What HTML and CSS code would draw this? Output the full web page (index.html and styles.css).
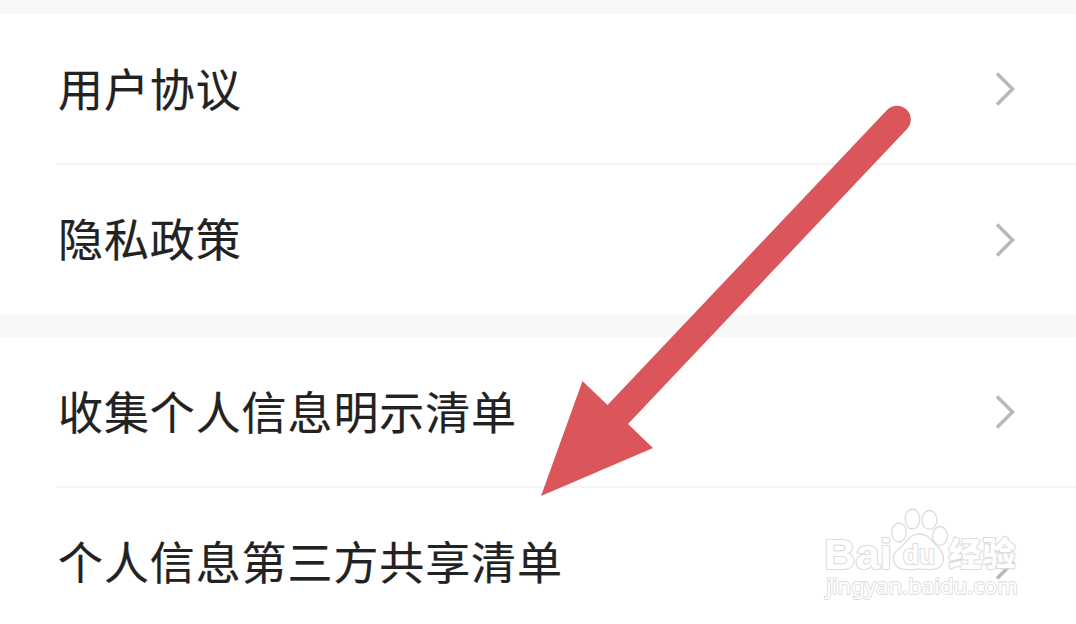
FILE: index.html
```
<!DOCTYPE html>
<html lang="zh-CN">
<head>
    <meta charset="UTF-8">
    <title>隐私</title>
    <link rel="stylesheet" href="styles.css">
</head>
<body>
<div class="page">
    <div class="group">
        <div class="row">
            <span class="label">用户协议</span>
            <svg class="chevron" width="20" height="36" viewBox="0 0 20 36"><path d="M2 2.500L17.500 18L2 33.500"/></svg>
        </div>
        <div class="row">
            <span class="label">隐私政策</span>
            <svg class="chevron" width="20" height="36" viewBox="0 0 20 36"><path d="M2 2.500L17.500 18L2 33.500"/></svg>
        </div>
    </div>
    <div class="group">
        <div class="row">
            <span class="label">收集个人信息明示清单</span>
            <svg class="chevron" width="20" height="36" viewBox="0 0 20 36"><path d="M2 2.500L17.500 18L2 33.500"/></svg>
        </div>
        <div class="row">
            <span class="label">个人信息第三方共享清单</span>
            <svg class="chevron" width="20" height="36" viewBox="0 0 20 36"><path d="M2 2.500L17.500 18L2 33.500"/></svg>
        </div>
    </div>
    <svg class="arrow" width="376" height="396" viewBox="0 0 376 396">
        <path d="M1 396L42.500 281L67.500 305L347 10A13.700 13.700 0 0 1 367 29L88 324L113 348Z"/>
    </svg>
    <svg class="watermark" width="230" height="110" viewBox="0 0 230 110">
        <text class="wm-brand" x="14" y="68.500" textLength="68" lengthAdjust="spacingAndGlyphs">Bai</text>
        <g class="wm-paw">
            <ellipse cx="102.500" cy="19" rx="7.300" ry="10"/>
            <ellipse cx="119.500" cy="20" rx="7.500" ry="9.500"/>
            <ellipse cx="89" cy="32.500" rx="7.300" ry="9.500"/>
            <ellipse cx="130" cy="36" rx="7.500" ry="9.500"/>
            <path d="M109 34C99 34 97 42 91 47C85 51 82 56 84 62C87 71 97 70 109 69C121 70 130 71 133 62C135 55 131 50 127 46C121 41 119 34 109 34Z"/>
        </g>
        <text class="wm-du" x="93" y="64" textLength="32" lengthAdjust="spacingAndGlyphs">du</text>
        <text class="wm-cn" x="138.500" y="66" textLength="67">经验</text>
        <text class="wm-url" x="16" y="94" textLength="192" lengthAdjust="spacingAndGlyphs">jingyan.baidu.com</text>
    </svg>
</div>
</body>
</html>
```
FILE: styles.css
```
body {
    margin: 0;
    background-color: #fff;
    font-family: "Noto Sans CJK SC", sans-serif;
}

.page {
    position: relative;
    height: 624px;
    overflow: hidden;
}

.group {
    border-top: 22px solid #f7f7f7;
}

.group:first-child {
    border-top-width: 14px;
}

.row {
    display: flex;
    align-items: center;
    justify-content: space-between;
    box-sizing: border-box;
    height: 150px;
    margin-left: 57px;
    padding-right: 61px;
}

.row:first-child {
    height: 151px;
    padding-top: 1px;
    border-bottom: 2px solid #f5f5f5;
}

.label {
    margin-bottom: 3px;
    padding-left: 1px;
    font-size: 45px;
    letter-spacing: .9px;
    line-height: 60px;
    color: #222;
    -webkit-text-stroke: .2px #222;
}

.row:last-child .label {
    margin-bottom: 5px;
}

.chevron path {
    fill: none;
    stroke: #b8b8b8;
    stroke-width: 3.5;
}

.arrow {
    position: absolute;
    left: 540px;
    top: 100px;
    fill: #da565b;
}

.watermark {
    position: absolute;
    left: 810px;
    top: 500px;
    fill: #fff;
    stroke: #dcdcdc;
    stroke-width: 2.2;
    stroke-linejoin: round;
    paint-order: stroke;
}

.wm-brand {
    font: bold 43px "Liberation Sans", sans-serif;
}

.wm-paw {
    stroke-width: 1.3;
    paint-order: normal;
}

.wm-du {
    font: bold 27px "Liberation Sans", sans-serif;
}

.wm-cn {
    font: 900 33px "Noto Sans CJK SC", sans-serif;
}

.wm-url {
    font: 22px "Noto Sans", sans-serif;
    stroke-width: 1.8;
}
```
